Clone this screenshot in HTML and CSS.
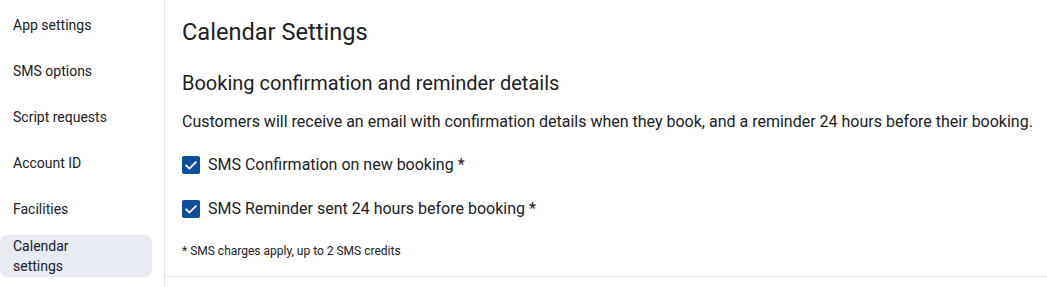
FILE: index.html
```html
<!DOCTYPE html>
<html lang="en">
<head>
<meta charset="utf-8">
<title>Calendar Settings</title>
<link rel="stylesheet" href="styles.css">
</head>
<body>
<div class="layout">
  <nav class="sidebar">
    <a class="nav-item">App settings</a>
    <a class="nav-item">SMS options</a>
    <a class="nav-item">Script requests</a>
    <a class="nav-item">Account ID</a>
    <a class="nav-item">Facilities</a>
    <a class="nav-item active"><span class="nav-label">Calendar settings</span></a>
  </nav>
  <main class="main">
    <section class="panel">
      <h1 class="title">Calendar Settings</h1>
      <h2 class="subtitle">Booking confirmation and reminder details</h2>
      <p class="desc">Customers will receive an email with confirmation details when they book, and a reminder 24 hours before their booking.</p>
      <label class="check-row">
        <span class="checkbox"><svg viewBox="0 0 18 18" width="18" height="18"><polyline points="4.2,9.4 7.4,12.6 13.8,6.2" fill="none" stroke="#fff" stroke-width="1.8" stroke-linecap="square"/></svg></span>
        <span class="check-label">SMS Confirmation on new booking *</span>
      </label>
      <label class="check-row second">
        <span class="checkbox"><svg viewBox="0 0 18 18" width="18" height="18"><polyline points="4.2,9.4 7.4,12.6 13.8,6.2" fill="none" stroke="#fff" stroke-width="1.8" stroke-linecap="square"/></svg></span>
        <span class="check-label">SMS Reminder sent 24 hours before booking *</span>
      </label>
      <p class="note">* SMS charges apply, up to 2 SMS credits</p>
    </section>
  </main>
</div>
</body>
</html>
```
FILE: styles.css
```css
html, body {
  margin: 0;
  padding: 0;
  background: #ffffff;
}
body {
  font-family: Roboto, "Liberation Sans", Arial, sans-serif;
  color: #202124;
}
.layout {
  display: flex;
  height: 287px;
}
.sidebar {
  width: 164px;
  flex: none;
  border-right: 1px solid #e2e2e6;
  display: flex;
  flex-direction: column;
  gap: 4px;
  padding-top: 4px;
  box-sizing: content-box;
}
.nav-item {
  display: flex;
  align-items: center;
  height: 42px;
  width: 152px;
  box-sizing: border-box;
  padding-left: 13px;
  font-size: 14px;
  line-height: 20px;
  color: #202124;
  border-radius: 8px;
}
.nav-item.active {
  margin-top: 1px;
  background: #e9ebf3;
}
.nav-label {
  max-width: 100px;
}
.main {
  flex: 1;
  min-width: 0;
}
.panel {
  padding: 18px 0 17px 17px;
  border-bottom: 1px solid #e4e4ea;
}
.title {
  margin: 0;
  font-size: 23.6px;
  line-height: 29px;
  font-weight: 400;
}
.subtitle {
  margin: 22px 0 0;
  font-size: 20px;
  line-height: 28px;
  font-weight: 400;
}
.desc {
  margin: 13px 0 0;
  font-size: 16px;
  line-height: 24px;
}
.check-row {
  display: flex;
  align-items: center;
  gap: 8px;
  margin-top: 19px;
  height: 24px;
  font-size: 16px;
  line-height: 24px;
}
.check-row.second {
  margin-top: 20px;
}
.checkbox {
  width: 18px;
  height: 18px;
  border-radius: 2px;
  background: #0d4f9c;
  display: flex;
}
.note {
  margin: 22px 0 0;
  font-size: 12px;
  line-height: 16px;
}
```
